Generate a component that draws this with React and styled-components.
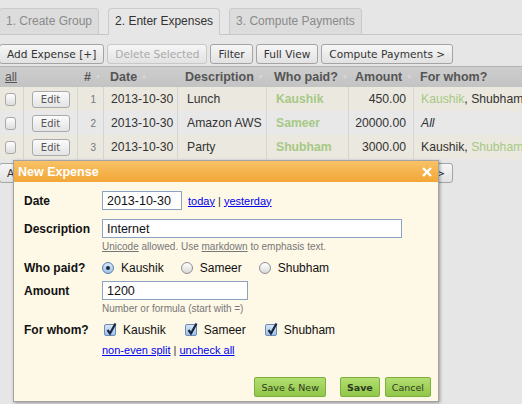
import React from 'react';
import styled, { createGlobalStyle } from 'styled-components';

const GlobalStyle = createGlobalStyle`
  html, body { margin: 0; padding: 0; background: #e6e6e6; overflow: hidden; }
  body { font-family: "Liberation Sans", Arial, sans-serif; font-size: 12px; color: #333; }
`;

const Page = styled.div`
  position: relative;
  width: 522px;
  height: 404px;
  overflow: hidden;
`;

const TabBar = styled.div`
  display: flex;
  gap: 9px;
  height: 26px;
  padding-top: 8px;
  border-bottom: 1px solid #c6c6c6;
`;

const Tab = styled.div`
  box-sizing: border-box;
  height: ${p => (p.$active ? '27px' : '26px')};
  padding: 0 6px;
  line-height: 25px;
  font-size: 12px;
  border: 1px solid #cacaca;
  border-bottom: none;
  border-radius: 4px 4px 0 0;
  background: ${p => (p.$active ? '#e6e6e6' : '#dcdcdc')};
  color: ${p => (p.$active ? '#333' : '#8a8a8a')};
  margin-left: ${p => (p.$first ? '-1px' : '0')};
`;

const Toolbar = styled.div`
  display: flex;
  gap: 3px;
  margin-top: ${p => p.$top || '9px'};
`;

const ToolButton = styled.button`
  box-sizing: border-box;
  height: 20px;
  padding: 0 7px;
  font-family: "DejaVu Sans", Verdana, sans-serif;
  font-size: 10.6px;
  color: ${p => (p.disabled ? '#aaa' : '#333')};
  background: linear-gradient(#f6f6f6, #e2e2e2);
  border: 1px solid ${p => (p.disabled ? '#c8c8c8' : '#a4a4a4')};
  border-radius: 3px;
  white-space: nowrap;
  margin-left: ${p => (p.$first ? '-1px' : '0')};
`;

const cols = '23px 54px 26px 74px 89px 82px 65px 130px';

const Grid = styled.div`
  margin-top: 2px;
  width: 543px;
`;

const HeadRow = styled.div`
  display: grid;
  grid-template-columns: ${cols};
  height: 20px;
  background: linear-gradient(#cdcdcd, #c3c3c3);
  border-top: 1px solid #b2b2b2;
`;

const HeadCell = styled.div`
  padding-left: ${p => p.$pl || '7px'};
  line-height: 20px;
  font-weight: bold;
  font-size: 12.5px;
  color: #555;
  white-space: nowrap;
`;

const AllLink = styled.span`
  font-weight: normal;
  font-size: 12px;
  text-decoration: underline;
  color: #555;
`;

const SortArrow = styled.span`
  display: inline-block;
  margin-left: 4px;
  font-size: 6px;
  vertical-align: 2px;
  color: #d9d9d9;
`;

const Row = styled.div`
  display: grid;
  grid-template-columns: ${cols};
  height: 24px;
  background: ${p => (p.$alt ? '#e8e8e8' : '#ebe8df')};
`;

const Cell = styled.div`
  display: flex;
  align-items: center;
  justify-content: ${p => p.$justify || 'flex-start'};
  padding: 0 ${p => p.$pr || '7px'} 0 ${p => p.$pl || '7px'};
  border-left: ${p => (p.$noline ? 'none' : '1px solid #d4d4d4')};
  font-size: 12.2px;
  color: #333;
  white-space: pre;
  font-style: ${p => (p.$italic ? 'italic' : 'normal')};
`;

const NumCell = styled(Cell)`
  font-size: 10px;
  color: #777;
`;

const RowCheck = styled.span`
  box-sizing: border-box;
  display: inline-block;
  width: 13px;
  height: 13px;
  border: 1px solid #a9a9a9;
  border-radius: 3px;
  background: linear-gradient(#fdfdfd, #dedede);
`;

const EditButton = styled.button`
  box-sizing: border-box;
  width: 38px;
  height: 17px;
  padding: 0;
  font-family: "DejaVu Sans", Verdana, sans-serif;
  font-size: 10px;
  color: #555;
  background: linear-gradient(#fbfbfb, #e4e4e4);
  border: 1px solid #aaa;
  border-radius: 3px;
`;

const Payer = styled.span`
  font-weight: bold;
  color: #a6c985;
`;

const Name = styled.span`
  color: ${p => (p.$hl ? '#a6c985' : '#333')};
`;

const Dialog = styled.div`
  position: absolute;
  left: 13px;
  top: 160px;
  width: 424px;
  height: 240px;
  display: flex;
  flex-direction: column;
  border: 1px solid #a3a3a3;
  background: #fef8e7;
  box-shadow: 1px 1px 3px rgba(0, 0, 0, 0.35);
`;

const TitleBar = styled.div`
  display: flex;
  align-items: center;
  justify-content: space-between;
  height: 21px;
  padding: 0 6px 0 4px;
  background: linear-gradient(#f8c266, #f3a637);
  color: #fff;
  font-weight: bold;
  font-size: 12.5px;
`;

const Body = styled.div`
  flex: 1;
  display: flex;
  flex-direction: column;
  padding: 9px 7px 4px 10px;
`;

const Field = styled.div`
  display: grid;
  grid-template-columns: 78px 1fr;
  align-items: center;
  margin-top: ${p => p.$top || '0'};
`;

const Label = styled.div`
  font-weight: bold;
  font-size: 12px;
  color: #111;
`;

const Control = styled.div`
  display: flex;
  align-items: center;
  grid-column: 2;
  gap: ${p => p.$gap || '0'};
`;

const Input = styled.input`
  box-sizing: border-box;
  width: ${p => p.$w};
  height: 19px;
  padding: 0 4px;
  font-family: "Liberation Sans", Arial, sans-serif;
  font-size: 12.5px;
  color: #111;
  background: #fff;
  border: 1px solid #8aa3c2;
  outline: none;
`;

const Links = styled.span`
  margin-left: ${p => p.$ml || '6px'};
  font-size: 11px;
  color: #333;
`;

const A = styled.a`
  color: #0000ee;
  text-decoration: underline;
`;

const Hint = styled.div`
  grid-column: 2;
  margin-top: 3px;
  font-size: 10px;
  line-height: 12px;
  color: #777;
`;

const Under = styled.span`
  text-decoration: underline;
`;

const Option = styled.label`
  display: flex;
  align-items: center;
  gap: 7px;
  font-size: 12px;
  color: #111;
`;

const Radio = styled.span`
  box-sizing: border-box;
  position: relative;
  width: 12px;
  height: 12px;
  border-radius: 50%;
  border: 1px solid ${p => (p.$on ? '#5a7dab' : '#8e8e8e')};
  background: ${p => (p.$on ? 'linear-gradient(#d9e8f8, #9fc2ea)' : 'linear-gradient(#ffffff, #dadada)')};
  &::after {
    content: '';
    display: ${p => (p.$on ? 'block' : 'none')};
    position: absolute;
    left: 3px;
    top: 3px;
    width: 4px;
    height: 4px;
    border-radius: 50%;
    background: #1c2a40;
  }
`;

const Box = styled.span`
  box-sizing: border-box;
  position: relative;
  width: 12px;
  height: 12px;
  margin-left: 2px;
  border-radius: 2px;
  border: 1px solid #6c8bb5;
  background: linear-gradient(#d6e6f8, #9ec3ec);
  svg { position: absolute; left: 0; top: -3px; overflow: visible; }
`;

const Buttons = styled.div`
  display: flex;
  justify-content: flex-end;
  margin-top: auto;
`;

const GreenButton = styled.button`
  box-sizing: border-box;
  height: 20px;
  padding: 0 6px;
  margin-left: ${p => p.$ml || '5px'};
  font-family: "DejaVu Sans", Verdana, sans-serif;
  font-size: 9.5px;
  font-weight: ${p => (p.$bold ? 'bold' : 'normal')};
  color: #2d3a22;
  background: linear-gradient(#b3de70, #91c748);
  border: 1px solid #7caf3d;
  border-radius: 2px;
`;

const Check = () => (
  <Box>
    <svg width="12" height="14" viewBox="0 0 12 14">
      <path d="M2.5 8 L5 11.5 L10.5 1.5" fill="none" stroke="#1a2740" strokeWidth="2.2" />
    </svg>
  </Box>
);

const CloseIcon = () => (
  <svg width="10" height="10" viewBox="0 0 10 10">
    <path d="M1 1 L9 9 M9 1 L1 9" stroke="#fff" strokeWidth="2.4" />
  </svg>
);

const rows = [
  { n: 1, date: '2013-10-30', desc: 'Lunch', payer: 'Kaushik', amount: '450.00', whom: [['Kaushik', true], ['Shubham', false]] },
  { n: 2, date: '2013-10-30', desc: 'Amazon AWS', payer: 'Sameer', amount: '20000.00', all: true },
  { n: 3, date: '2013-10-30', desc: 'Party', payer: 'Shubham', amount: '3000.00', whom: [['Kaushik', false], ['Shubham', true]] },
];

const ExpenseToolbar = ({ top }) => (
  <Toolbar $top={top}>
    <ToolButton $first>Add Expense [+]</ToolButton>
    <ToolButton disabled>Delete Selected</ToolButton>
    <ToolButton>Filter</ToolButton>
    <ToolButton>Full View</ToolButton>
    <ToolButton>Compute Payments &gt;</ToolButton>
  </Toolbar>
);

export default function App() {
  return (
    <Page>
      <GlobalStyle />
      <TabBar>
        <Tab $first>1. Create Group</Tab>
        <Tab $active>2. Enter Expenses</Tab>
        <Tab>3. Compute Payments</Tab>
      </TabBar>

      <ExpenseToolbar />

      <Grid>
        <HeadRow>
          <HeadCell $pl="5px"><AllLink>all</AllLink></HeadCell>
          <HeadCell />
          <HeadCell>#<SortArrow>▼</SortArrow></HeadCell>
          <HeadCell>Date<SortArrow>▼</SortArrow></HeadCell>
          <HeadCell $pl="8px">Description<SortArrow>▼</SortArrow></HeadCell>
          <HeadCell $pl="8px">Who paid?<SortArrow>▼</SortArrow></HeadCell>
          <HeadCell>Amount<SortArrow>▼</SortArrow></HeadCell>
          <HeadCell>For whom?</HeadCell>
        </HeadRow>
        {rows.map((r, i) => (
          <Row key={r.n} $alt={i === 1}>
            <Cell $noline $pl="5px"><RowCheck /></Cell>
            <Cell $justify="center" $pl="0" $pr="0"><EditButton>Edit</EditButton></Cell>
            <NumCell $justify="flex-end">{r.n}</NumCell>
            <Cell>{r.date}</Cell>
            <Cell $pl="9px">{r.desc}</Cell>
            <Cell $pl="9px"><Payer>{r.payer}</Payer></Cell>
            <Cell $justify="flex-end">{r.amount}</Cell>
            <Cell $italic={r.all}>
              {r.all ? (
                'All'
              ) : (
                <span>
                  {r.whom.map(([name, hl], j) => (
                    <React.Fragment key={name}>
                      {j > 0 && ', '}
                      <Name $hl={hl}>{name}</Name>
                    </React.Fragment>
                  ))}
                </span>
              )}
            </Cell>
          </Row>
        ))}
      </Grid>

      <ExpenseToolbar top="4px" />

      <Dialog>
        <TitleBar>
          <span>New Expense</span>
          <CloseIcon />
        </TitleBar>
        <Body>
          <Field>
            <Label>Date</Label>
            <Control>
              <Input $w="80px" defaultValue="2013-10-30" />
              <Links><A href="#">today</A> | <A href="#">yesterday</A></Links>
            </Control>
          </Field>
          <Field $top="9px">
            <Label>Description</Label>
            <Control>
              <Input $w="300px" defaultValue="Internet" />
            </Control>
            <Hint>
              <Under>Unicode</Under> allowed. Use <Under>markdown</Under> to emphasis text.
            </Hint>
          </Field>
          <Field $top="8px">
            <Label>Who paid?</Label>
            <Control $gap="17px">
              <Option><Radio $on />Kaushik</Option>
              <Option><Radio />Sameer</Option>
              <Option><Radio />Shubham</Option>
            </Control>
          </Field>
          <Field $top="6px">
            <Label>Amount</Label>
            <Control>
              <Input $w="146px" defaultValue="1200" />
            </Control>
            <Hint>Number or formula (start with =)</Hint>
          </Field>
          <Field $top="8px">
            <Label>For whom?</Label>
            <Control $gap="17px">
              <Option><Check />Kaushik</Option>
              <Option><Check />Sameer</Option>
              <Option><Check />Shubham</Option>
            </Control>
          </Field>
          <Field $top="7px">
            <span />
            <Control>
              <Links $ml="0"><A href="#">non-even split</A> | <A href="#">uncheck all</A></Links>
            </Control>
          </Field>
          <Buttons>
            <GreenButton $ml="0">Save &amp; New</GreenButton>
            <GreenButton $ml="14px" $bold>Save</GreenButton>
            <GreenButton>Cancel</GreenButton>
          </Buttons>
        </Body>
      </Dialog>
    </Page>
  );
}
